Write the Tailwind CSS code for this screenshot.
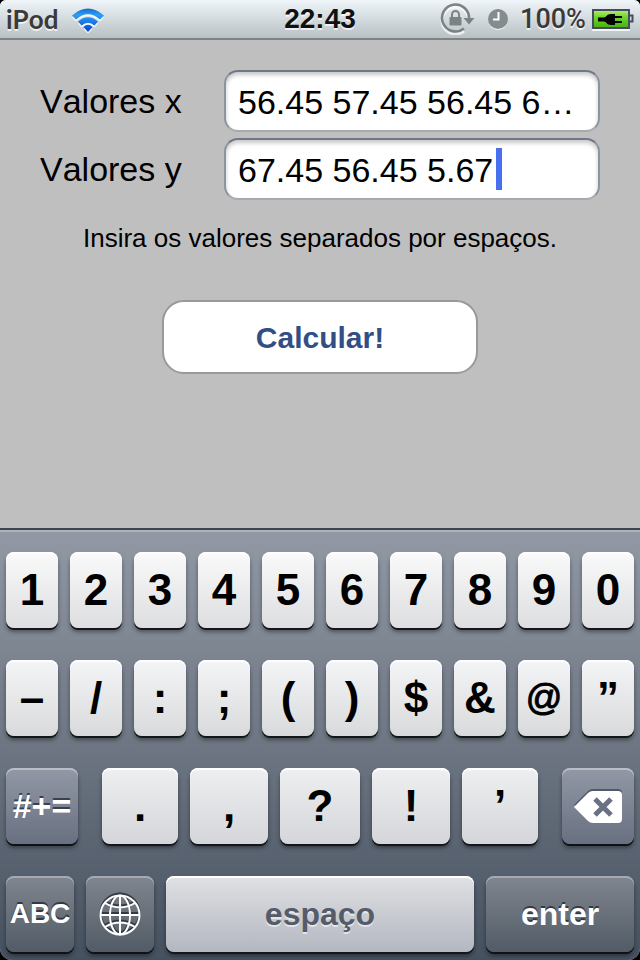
<!DOCTYPE html>
<html lang="pt">
<head>
<meta charset="utf-8">
<meta name="viewport" content="width=device-width, initial-scale=1">
<title>Valores</title>
<script src="https://cdn.jsdelivr.net/npm/@tailwindcss/browser@4"></script>
</head>
<body class="bg-black font-['Liberation_Sans',Arial,sans-serif] text-black [font-kerning:none]">
<div class="flex min-h-screen flex-col overflow-hidden rounded-t-md rounded-b-xl bg-[#bfbfbf]">

  <header class="grid h-10 shrink-0 grid-cols-[1fr_auto_1fr] items-center border-b-2 border-[#7b8487] bg-linear-to-b from-[#eff5f8] to-[#b9c1c4] px-1.5">
    <div class="flex items-center gap-3">
      <span class="font-['Lato',sans-serif] text-[26px] leading-8 font-bold text-[#3a3a3a] [text-shadow:0_2px_0_#ffffffb0]">iPod</span>
      <svg class="h-7 w-9" viewBox="0 0 36 28" role="img" aria-label="Wi-Fi">
        <defs><linearGradient id="wifi" x1="0" y1="3" x2="0" y2="26" gradientUnits="userSpaceOnUse"><stop offset="0" stop-color="#1c63c8"/><stop offset=".3" stop-color="#2aa0f5"/><stop offset="1" stop-color="#0648d8"/></linearGradient></defs>
        <g transform="translate(0 2)" fill="#fff" opacity=".8"><path d="M2 10.500Q18-3.500 34 10.500L30 14.500Q18 4 6 14.500ZM8 16.500Q18 8 28 16.500L24.500 20.500Q18 15 11.500 20.500ZM13.500 22Q18 17.500 22.500 22L18 27Z"/></g>
        <path fill="url(#wifi)" d="M2 10.500Q18-3.500 34 10.500L30 14.500Q18 4 6 14.500ZM8 16.500Q18 8 28 16.500L24.500 20.500Q18 15 11.500 20.500ZM13.500 22Q18 17.500 22.500 22L18 27Z"/>
      </svg>
    </div>
    <time class="text-[28px] leading-8 font-bold text-[#111] [text-shadow:0_2px_0_#ffffffb0]">22:43</time>
    <div class="flex items-center justify-end">
      <svg class="mr-3 h-8 w-9" viewBox="0 0 36 32" role="img" aria-label="Rotação bloqueada">
        <g transform="translate(0 2)" stroke="#fff" stroke-opacity=".7" fill="none" stroke-width="3"><path d="M29 15A13.500 13.500 0 1 0 24 26"/></g>
        <path d="M29 16A13.500 13.500 0 1 0 24 25.500" fill="none" stroke="#7b8385" stroke-width="2.600"/>
        <path d="M23.500 15h11l-5.500 6.500z" fill="#7b8385"/>
        <rect x="9.500" y="14" width="12" height="8.500" rx="1" fill="#7b8385"/>
        <path d="M12 14v-2.500a3.500 3.500 0 0 1 7 0V14" fill="none" stroke="#7b8385" stroke-width="2"/>
      </svg>
      <svg class="mr-3 h-6 w-5" viewBox="0 0 20 24" role="img" aria-label="Alarme">
        <circle cx="10" cy="13.500" r="9.500" fill="#fff" opacity=".8"/><circle cx="10" cy="12" r="10" fill="#848c8e"/>
        <path d="M10.500 5v7.500H5" fill="none" stroke="#fff" stroke-width="2"/>
      </svg>
      <span class="mr-1.5 font-['Roboto',sans-serif] text-[27px] leading-8 font-medium text-[#3a3a3a] [text-shadow:0_2px_0_#ffffffb0]">100%</span>
      <svg class="h-6 w-[42px]" viewBox="0 0 42 24" role="img" aria-label="Bateria a carregar">
        <defs><linearGradient id="bat" x1="0" y1="0" x2="0" y2="1"><stop offset="0" stop-color="#b3f06e"/><stop offset=".4" stop-color="#6ed52b"/><stop offset="1" stop-color="#45b010"/></linearGradient></defs>
        <path d="M0 23h38" stroke="#fff" stroke-opacity=".8" stroke-width="2"/>
        <rect x="1" y="3" width="36" height="18" fill="url(#bat)" stroke="#454b60" stroke-width="2"/>
        <path d="M38 8.500h2.500v6H38" fill="none" stroke="#454b60" stroke-width="2"/>
        <path d="M6 10.500h6c2 0 3-3.500 7-3.500h4v2h7v2h-7v3h7v2h-7v2h-4c-4 0-5-3.500-7-3.500H6z" fill="#000"/>
      </svg>
    </div>
  </header>

  <main class="px-10 pt-[30px] pb-8">
    <form id="dados">
      <div class="flex flex-col gap-1.5">
        <div class="flex items-center">
          <label for="vx" class="w-[184px] shrink-0 text-[34px] leading-10">Valores x</label>
          <input id="vx" type="text" value="56.45 57.45 56.45 67.45" class="h-[62px] min-w-0 flex-1 rounded-[14px] border-2 border-[#8b94a0] border-t-[#6c7888] border-b-[#a6abb2] bg-white px-3 pt-0.5 text-[34px] text-ellipsis shadow-[inset_0_3px_4px_#00000038] outline-none">
        </div>
        <div class="flex items-center">
          <label for="vy" class="w-[184px] shrink-0 text-[34px] leading-10">Valores y</label>
          <div class="relative flex min-w-0 flex-1">
            <input id="vy" type="text" value="67.45 56.45 5.67" class="h-[62px] w-full rounded-[14px] border-2 border-[#8b94a0] border-t-[#6c7888] border-b-[#a6abb2] bg-white px-3 pt-0.5 text-[34px] shadow-[inset_0_3px_4px_#00000038] outline-none">
            <span class="absolute top-2.5 left-[272px] h-[42px] w-1.5 bg-[#476ff0]"></span>
          </div>
        </div>
      </div>
      <p class="mt-[22px] text-center text-[26px] leading-8">Insira os valores separados por espaços.</p>
      <button type="button" class="mx-auto mt-[46px] block h-[74px] w-[316px] rounded-[22px] border-2 border-[#999] bg-white text-[30px] font-bold text-[#324f85]">Calcular!</button>
    </form>
  </main>

  <section aria-label="Teclado" class="mt-auto flex flex-col gap-8 border-t-2 border-[#40444d] bg-linear-to-b from-[#9299a5] via-[#6d7682] to-[#465160] px-1.5 pt-[22px] pb-2 text-[44px] font-bold shadow-[inset_0_2px_0_#adb3bd] [text-shadow:0_2px_0_#fff] *:grid *:gap-3 [&_button]:flex [&_button]:h-[76px] [&_button]:min-w-0 [&_button]:items-center [&_button]:justify-center [&_button]:rounded-lg [&_button]:leading-none">
    <div class="grid-cols-10 [&>button]:bg-linear-to-b [&>button]:from-[#fafafa] [&>button]:to-[#dddee0] [&>button]:shadow-[0_2px_0_#14161a,0_4px_4px_#0006,inset_0_2px_0_#fff]">
      <button type="button">1</button><button type="button">2</button><button type="button">3</button><button type="button">4</button><button type="button">5</button><button type="button">6</button><button type="button">7</button><button type="button">8</button><button type="button">9</button><button type="button">0</button>
    </div>
    <div class="grid-cols-10 [&>button]:bg-linear-to-b [&>button]:from-[#f4f5f7] [&>button]:to-[#d9dadc] [&>button]:shadow-[0_2px_0_#14161a,0_4px_4px_#0006,inset_0_2px_0_#fff]">
      <button type="button">–</button><button type="button">/</button><button type="button">:</button><button type="button">;</button><button type="button">(</button><button type="button">)</button><button type="button">$</button><button type="button">&amp;</button><button type="button" class="text-[36px] font-normal [-webkit-text-stroke:1px_#000]">@</button><button type="button">”</button>
    </div>
    <div class="grid-cols-[72fr_460fr_72fr]">
      <button type="button" class="bg-linear-to-b from-[#9298a5] to-[#687081] text-[34px] text-white shadow-[0_2px_0_#0e1115,0_4px_4px_#0006,inset_0_2px_0_#b9bec6] [text-shadow:0_-2px_0_#3b414b]">#+=</button>
      <div class="grid grid-cols-[76fr_78fr_80fr_78fr_76fr] gap-3 px-3 [&>button]:bg-linear-to-b [&>button]:from-[#eeeff0] [&>button]:to-[#d5d6da] [&>button]:shadow-[0_2px_0_#14161a,0_4px_4px_#0006,inset_0_2px_0_#fff]">
        <button type="button">.</button><button type="button">,</button><button type="button">?</button><button type="button">!</button><button type="button">’</button>
      </div>
      <button type="button" aria-label="Apagar" class="bg-linear-to-b from-[#9298a5] to-[#687081] shadow-[0_2px_0_#0e1115,0_4px_4px_#0006,inset_0_2px_0_#b9bec6]">
        <svg class="h-[34px] w-12" viewBox="0 0 48 34"><path d="M0 16 14 2Q16 0 19 0H44Q48 0 48 4V28Z" fill="#515968"/><path d="M0 18 14 4Q16 2 19 2H44Q48 2 48 6V30Q48 34 44 34H19Q16 34 14 32Z" fill="#fff"/><path d="m21 10 16 16M37 10 21 26" stroke="#697183" stroke-width="5"/></svg>
      </button>
    </div>
    <div class="grid-cols-[68fr_68fr_308fr_148fr] [&>button]:shadow-[0_2px_0_#0e1115,0_4px_4px_#0006,inset_0_2px_0_#a4a9b2]">
      <button type="button" class="bg-linear-to-b from-[#81868f] to-[#525c66] text-[28px] text-white [text-shadow:0_-2px_0_#343a43]">ABC</button>
      <button type="button" aria-label="Mudar de teclado" class="bg-linear-to-b from-[#81868f] to-[#525c66]">
        <svg class="h-11 w-[42px]" viewBox="0 0 42 44" fill="none" stroke-width="2">
          <defs><g id="globe"><circle cx="21" cy="21" r="19.500"/><ellipse cx="21" cy="21" rx="10" ry="19.500"/><path d="M21 1.500v39M1.500 21h39M6 9Q21 18 36 9M6 33Q21 24 36 33"/></g></defs>
          <use href="#globe" stroke="#343a43"/><use href="#globe" y="2" stroke="#fff"/>
        </svg>
      </button>
      <button type="button" class="bg-linear-to-b from-[#e0e1e4] to-[#b3b7c0] text-[32px] text-[#555b69] shadow-[0_2px_0_#14161a,0_4px_4px_#0006,inset_0_2px_0_#fff]! [text-shadow:0_2px_0_#ffffff90]">espaço</button>
      <button type="button" class="bg-linear-to-b from-[#81868f] to-[#525c66] text-[32px] text-white [text-shadow:0_-2px_0_#343a43]">enter</button>
    </div>
  </section>
</div>
</body>
</html>
